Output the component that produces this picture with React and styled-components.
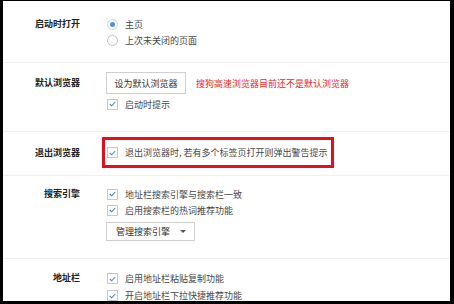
import React from 'react';
import styled, { createGlobalStyle } from 'styled-components';

const GlobalStyle = createGlobalStyle`
  html, body {
    margin: 0;
    padding: 0;
    background: #000;
  }
  body {
    font-family: "Noto Sans CJK SC", "Noto Sans", sans-serif;
  }
`;

const Frame = styled.div`
  width: 454px;
  height: 304px;
  box-sizing: border-box;
  border-style: solid;
  border-color: #000;
  border-width: 1px 4px 3px 3px;
  background: #fff;
  overflow: hidden;
`;

const Section = styled.div`
  display: flex;
  align-items: flex-start;
  padding: ${(p) => p.pad || '0'};
  border-bottom: 1px solid #efefef;

  &:last-child {
    border-bottom: none;
  }
`;

const Label = styled.div`
  width: 77px;
  flex: none;
  text-align: right;
  font-size: 9px;
  font-weight: bold;
  color: #222;
  line-height: ${(p) => p.lh || '16px'};
`;

const Content = styled.div`
  margin-left: 26px;
  display: flex;
  flex-direction: column;
  align-items: flex-start;
`;

const Line = styled.div`
  height: ${(p) => p.h || 16}px;
  display: flex;
  align-items: center;
  gap: 7px;
  font-size: 9px;
  color: #484848;
  white-space: nowrap;
`;

const RadioDot = styled.span`
  width: 9px;
  height: 9px;
  border-radius: 50%;
  border: 1px solid ${(p) => (p.checked ? '#c5d6ec' : '#c2c2c2')};
  background: #fff;
  display: flex;
  align-items: center;
  justify-content: center;
  margin-left: 1px;

  &::after {
    content: '';
    width: 5px;
    height: 5px;
    border-radius: 50%;
    background: ${(p) => (p.checked ? '#4d8fdc' : 'transparent')};
  }
`;

const Box = styled.span`
  width: 9px;
  height: 9px;
  border: 1px solid #c8c8c8;
  background: #fff;
  display: flex;
  align-items: center;
  justify-content: center;
  margin-left: 1px;
`;

const Button = styled.div`
  height: ${(p) => p.h || 22}px;
  box-sizing: border-box;
  border: 1px solid #cfcfcf;
  background: #fff;
  padding: 0 ${(p) => (p.drop ? '8px' : '0')} 0 ${(p) => (p.drop ? '9px' : '0')};
  margin-top: ${(p) => p.mt || 0}px;
  width: ${(p) => p.w}px;
  display: flex;
  align-items: center;
  justify-content: ${(p) => (p.drop ? 'space-between' : 'center')};
  font-size: 9px;
  color: #333;
  white-space: nowrap;
`;

const Arrow = styled.span`
  width: 0;
  height: 0;
  border-left: 3px solid transparent;
  border-right: 3px solid transparent;
  border-top: 3px solid #555;
`;

const Row = styled.div`
  display: flex;
  align-items: center;
  gap: 10px;
  margin-bottom: 2px;
`;

const Warn = styled.span`
  font-size: 9px;
  color: #ee1c24;
  white-space: nowrap;
`;

const Highlight = styled.div`
  margin-left: -4px;
  width: 232px;
  height: 31px;
  box-sizing: border-box;
  border: 3px solid #e3101c;
  padding-left: 1px;
  display: flex;
  align-items: center;
`;

const Check = () => (
  <Box>
    <svg width="7" height="6" viewBox="0 0 7 6">
      <path d="M0.8 3 L2.7 4.8 L6.2 1" fill="none" stroke="#3f86d6" strokeWidth="1.1" />
    </svg>
  </Box>
);

const CheckLine = ({ children, h }) => (
  <Line h={h}>
    <Check />
    {children}
  </Line>
);

export default function App() {
  return (
    <>
      <GlobalStyle />
      <Frame>
        <Section pad="15px 0 14px">
          <Label>启动时打开</Label>
          <Content>
            <Line>
              <RadioDot checked />
              主页
            </Line>
            <Line>
              <RadioDot />
              上次未关闭的页面
            </Line>
          </Content>
        </Section>

        <Section pad="9px 0 19px">
          <Label lh="22px">默认浏览器</Label>
          <Content>
            <Row>
              <Button w={80}>设为默认浏览器</Button>
              <Warn>搜狗高速浏览器目前还不是默认浏览器</Warn>
            </Row>
            <CheckLine>启动时提示</CheckLine>
          </Content>
        </Section>

        <Section pad="5px 0 7px">
          <Label lh="31px">退出浏览器</Label>
          <Content>
            <Highlight>
              <CheckLine>退出浏览器时, 若有多个标签页打开则弹出警告提示</CheckLine>
            </Highlight>
          </Content>
        </Section>

        <Section pad="10px 0 17px">
          <Label>搜索引擎</Label>
          <Content>
            <CheckLine>地址栏搜索引擎与搜索栏一致</CheckLine>
            <CheckLine>启用搜索栏的热词推荐功能</CheckLine>
            <Button drop w={89} h={19} mt={4}>
              管理搜索引擎
              <Arrow />
            </Button>
          </Content>
        </Section>

        <Section pad="11px 0 0">
          <Label>地址栏</Label>
          <Content>
            <CheckLine h={17}>启用地址栏粘贴复制功能</CheckLine>
            <CheckLine h={17}>开启地址栏下拉快捷推荐功能</CheckLine>
          </Content>
        </Section>
      </Frame>
    </>
  );
}
